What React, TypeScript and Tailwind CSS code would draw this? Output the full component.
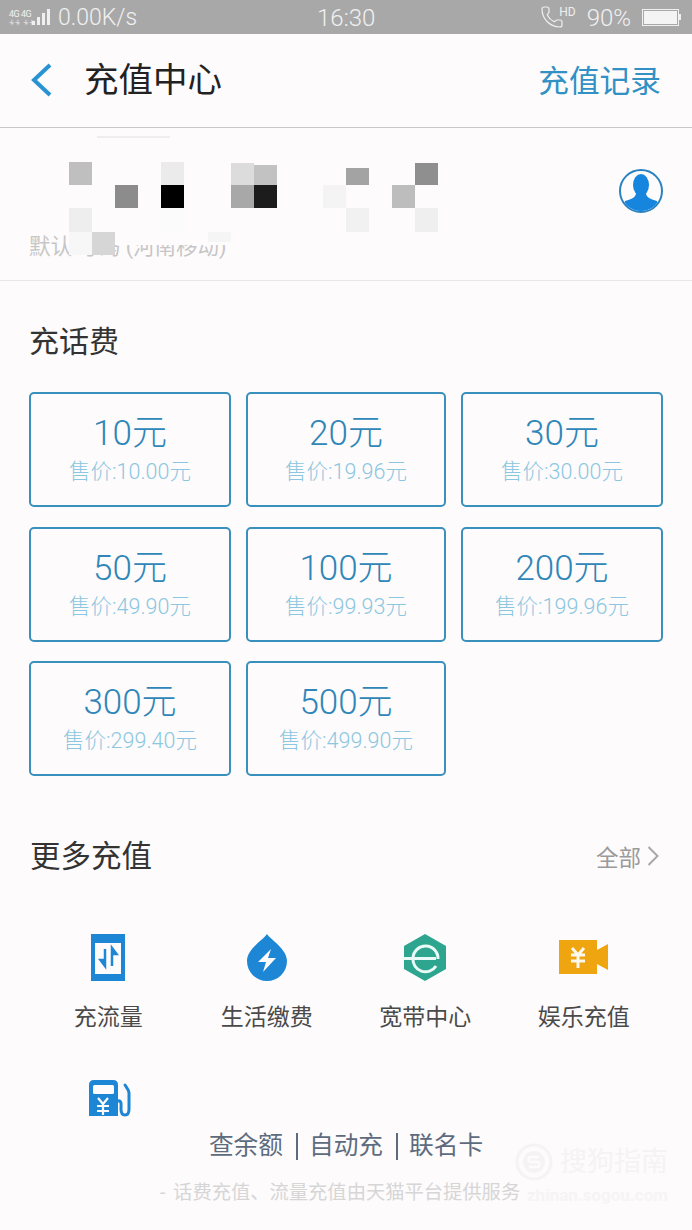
import React from "react";
import { Phone } from "lucide-react";

const FONT = "[font-family:Roboto,'Noto_Sans_CJK_SC',sans-serif]";

const plans = [
  ["10元", "售价:10.00元"],
  ["20元", "售价:19.96元"],
  ["30元", "售价:30.00元"],
  ["50元", "售价:49.90元"],
  ["100元", "售价:99.93元"],
  ["200元", "售价:199.96元"],
  ["300元", "售价:299.40元"],
  ["500元", "售价:499.90元"],
];

const Mosaic = () => {
  const blocks = [
    [69, 162, 23, 23, "#bfbfbf"],
    [161, 162, 23, 23, "#ebebeb"],
    [231, 163, 23, 22, "#dcdcdc"],
    [254, 165, 23, 20, "#c2c2c2"],
    [346, 168, 23, 17, "#a3a3a3"],
    [415, 163, 23, 22, "#8f8f8f"],
    [115, 185, 23, 23, "#8c8c8c"],
    [161, 185, 23, 23, "#000000"],
    [231, 185, 23, 23, "#a8a8a8"],
    [254, 185, 23, 23, "#1c1c1c"],
    [323, 185, 23, 23, "#f4f4f4"],
    [392, 185, 23, 23, "#bdbdbd"],
    [69, 208, 23, 24, "#eeeeee"],
    [161, 208, 23, 24, "#fbfbfb"],
    [346, 208, 23, 24, "#f1f1f1"],
    [415, 208, 23, 24, "#efefef"],
    [69, 232, 23, 23, "#f7f7f7"],
    [92, 232, 23, 23, "#d6d6d6"],
    [208, 232, 23, 10, "#f5f5f5"],
  ] as const;
  return (
    <>
      {blocks.map(([x, y, w, h, c], i) => (
        <div
          key={i}
          className="absolute"
          style={{ left: x, top: y - 128, width: w, height: h, background: c }}
        />
      ))}
    </>
  );
};

const FlowIcon = () => (
  <svg width="34" height="47" viewBox="0 0 34 47">
    <rect width="34" height="47" fill="#1d87d6" />
    <rect x="4" y="9" width="26" height="31" fill="#fdfbfc" />
    <path d="M14 15v17M9.500 26l4.500 6v-6zM21 32V14M25.500 20L21 14v6z" stroke="#1d87d6" strokeWidth="2.500" fill="#1d87d6" />
  </svg>
);

const DropIcon = () => (
  <svg width="40" height="47" viewBox="0 0 40 47">
    <path d="M20 0C16 6 0 15 0 27a20 20 0 0 0 40 0C40 15 24 6 20 0z" fill="#1d87d6" />
    <path d="M24 15L11 28h8l-3 10 13-14h-8z" fill="#fdfbfc" />
  </svg>
);

const BroadbandIcon = () => (
  <svg width="44" height="47" viewBox="0 0 44 47">
    <path d="M22 0l21 12v23L22 47 1 35V12z" fill="#2ea58f" />
    <path d="M0 24.500h33" stroke="#eafaf6" strokeWidth="3" />
    <path d="M10 24a12.500 12.500 0 0 1 25 1M33 32a12.500 12.500 0 0 1-23-8" stroke="#eafaf6" strokeWidth="3" fill="none" />
  </svg>
);

const VideoIcon = () => (
  <svg width="49" height="34" viewBox="0 0 49 34">
    <path d="M0 0h38v10l11-6v26l-11-6v10H0z" fill="#efa50f" />
    <path d="M13 8l6 7 6-7M19 15v13M12 15h14M12 21h14" stroke="#fdf8ee" strokeWidth="3" fill="none" />
  </svg>
);

const FuelIcon = () => (
  <svg width="42" height="38" viewBox="0 0 42 38">
    <path d="M0 37V6q0-5 5-5h19q5 0 5 5v31z" fill="#1d87d6" />
    <rect x="4" y="6" width="21" height="9" rx="1.500" fill="#fdfbfc" />
    <path d="M9 19l5 6 5-6M14 25v11M8 27h12M8 32h12" stroke="#fdfbfc" strokeWidth="2.200" fill="none" />
    <path d="M29 22c4-1 3 4 3 8s1 6 4 6 4-3 4-6V14c0-3-2-5-4-8" stroke="#1d87d6" strokeWidth="3" fill="none" strokeLinecap="round" />
  </svg>
);

const services = [
  { label: "充流量", icon: <FlowIcon /> },
  { label: "生活缴费", icon: <DropIcon /> },
  { label: "宽带中心", icon: <BroadbandIcon /> },
  { label: "娱乐充值", icon: <VideoIcon /> },
];

export default function App() {
  return (
    <div className={`relative w-[692px] h-[1230px] overflow-hidden bg-[#fdfbfc] ${FONT}`}>
      {/* status bar */}
      <div className="h-[34px] bg-[#a9a8a9] flex items-center text-[#f0f0f0] relative">
        <div className="ml-[9px] w-[26px] flex flex-col leading-none">
          <span className="text-[9px] leading-[10px] whitespace-nowrap tracking-[-0.5px]">4G 4G</span>
          <span className="text-[5px] leading-[6px] whitespace-nowrap tracking-[1px]">卡卡 卡卡</span>
        </div>
        <div className="flex items-end gap-[2px] h-[16px] ml-[-3px]">
          <span className="w-[3px] h-[4px] bg-[#f0f0f0]" />
          <span className="w-[3px] h-[8px] bg-[#f0f0f0]" />
          <span className="w-[3px] h-[12px] bg-[#f0f0f0]" />
          <span className="w-[3px] h-[16px] bg-[#f0f0f0]" />
        </div>
        <span className="ml-[8px] mt-[2px] text-[23px] font-light leading-[34px]">0.00K/s</span>
        <span className="absolute left-[317px] top-[1px] text-[24px] font-light leading-[34px]">16:30</span>
        <div className="ml-auto flex items-center">
          <Phone size={24} strokeWidth={1.2} className="text-[#f0f0f0]" />
          <span className="text-[12px] leading-none mb-[10px] ml-[-5px]">HD</span>
          <span className="ml-[11px] mt-[2px] text-[24px] font-light leading-[34px]">90%</span>
          <div className="ml-[11px] mr-[11px] flex items-center">
            <div className="w-[37px] h-[17px] border border-[#f0f0f0] p-[1px]">
              <div className="w-full h-full bg-[#f4f4f4]" />
            </div>
            <div className="w-[2px] h-[6px] bg-[#f0f0f0]" />
          </div>
        </div>
      </div>

      {/* header */}
      <div className="h-[94px] border-b border-[#c8c8c8] flex items-center">
        <svg width="24" height="34" viewBox="0 0 24 34" className="ml-[30px] mt-[-1px]">
          <path d="M20 2L4 17l16 15" stroke="#2a93d2" strokeWidth="4" fill="none" />
        </svg>
        <span className="ml-[30px] text-[34.500px] text-[#222222] leading-none">充值中心</span>
        <span className="ml-auto mr-[31px] mt-[3px] text-[30.700px] text-[#3190c4] leading-none">充值记录</span>
      </div>

      {/* account */}
      <div className="relative h-[153px] border-b border-[#e8e8e8]">
        <div className="absolute left-[97px] top-[8px] w-[73px] h-[2px] bg-[#eeeeee]" />
        <span className="absolute left-[29px] top-[103px] text-[21.500px] leading-[32px] text-[#c6c6c6] whitespace-nowrap">
          默认 号码 (河南移动)
        </span>
        <div className="absolute left-[78px] top-[100px] w-[150px] h-[17px] bg-[#fdfbfc]" />
        <Mosaic />
        <div className="absolute left-[619px] top-[41px] w-[44px] h-[44px] rounded-full border-2 border-[#2a83c0] overflow-hidden">
          <svg width="40" height="40" viewBox="0 0 40 40">
            <ellipse cx="20" cy="14" rx="8" ry="11" fill="#1685de" />
            <path d="M15 21c0 4-1 6-11 9l-2 10h36l-2-10c-10-3-11-5-11-9z" fill="#1685de" />
          </svg>
        </div>
      </div>

      {/* top-up amounts */}
      <div className="pl-[29px] pt-[42px]">
        <h2 className="text-[30px] leading-[38px] text-[#333333] font-normal">充话费</h2>
        <div className="mt-[31px] grid grid-cols-[202px_200px_202px] gap-x-[15px] gap-y-[19.500px]">
          {plans.map(([amount, price]) => (
            <div
              key={amount}
              className="h-[115px] rounded-[5px] border-2 border-[#3a90bd] flex flex-col items-center pt-[19px]"
            >
              <span className="text-[35px] font-light leading-[42px] text-[#2f86b8]">{amount}</span>
              <span className="text-[21.500px] font-light leading-[30px] mt-[2px] text-[#8bc7e0]">{price}</span>
            </div>
          ))}
        </div>
      </div>

      {/* more */}
      <div className="mt-[61px] flex items-center pl-[30px] pr-[33px]">
        <h2 className="text-[30.500px] leading-[38px] text-[#333333] font-normal">更多充值</h2>
        <span className="ml-auto text-[22.500px] mt-[2px] leading-[38px] text-[#9a9a9a]">全部</span>
        <svg width="12" height="20" viewBox="0 0 12 20" className="ml-[6px] mt-[-2px]">
          <path d="M1.500 1l9 9-9 9" stroke="#a8a8a8" strokeWidth="2" fill="none" />
        </svg>
      </div>

      <div className="mt-[56px] ml-[29px] w-[634px] grid grid-cols-4">
        {services.map((s) => (
          <div key={s.label} className="flex flex-col items-center">
            <div className="h-[48px] flex items-center justify-center">{s.icon}</div>
            <span className="mt-[19px] text-[23px] leading-[36px] text-[#4a4a4a]">{s.label}</span>
          </div>
        ))}
        <div className="mt-[43px] flex justify-center pl-[4px]">
          <FuelIcon />
        </div>
      </div>

      <div className="mt-[9px] flex justify-center items-center text-[24.700px] leading-[40px] text-[#5d6b7e]">
        <span>查余额</span>
        <span className="ml-[13px] mr-[11px] w-[2px] h-[27px] bg-[#5d6b7e]" />
        <span>自动充</span>
        <span className="ml-[13px] mr-[11px] w-[2px] h-[27px] bg-[#5d6b7e]" />
        <span>联名卡</span>
      </div>
      <div className="mt-[13px] pl-[160px] text-[19.300px] leading-[28px] text-[#d6d6d6] whitespace-nowrap [word-spacing:3px]">
        - 话费充值、流量充值由天猫平台提供服务 -
      </div>

      {/* watermark */}
      <div className="absolute left-[515px] top-[1143px] w-[160px]">
        <div className="flex items-center">
          <svg width="38" height="38" viewBox="0 0 38 38">
            <circle cx="19" cy="19" r="17" stroke="#f5f3f4" strokeWidth="3" fill="none" />
            <circle cx="19" cy="19" r="11" fill="#f5f3f4" />
            <path d="M24 14h-8q-2.500 0-2.500 2.500t2.500 2.500h6q2.500 0 2.500 2.500T22 24h-8" stroke="#fdfbfc" strokeWidth="2.500" fill="none" />
          </svg>
          <span className="ml-[7px] text-[27px] leading-[36px] text-[#f5f3f4] whitespace-nowrap">搜狗指南</span>
        </div>
        <div className="mt-[3px] text-right pr-[7px] text-[17px] leading-[22px] font-bold text-[#f6f4f5] whitespace-nowrap">
          zhinan.sogou.com
        </div>
      </div>
    </div>
  );
}
